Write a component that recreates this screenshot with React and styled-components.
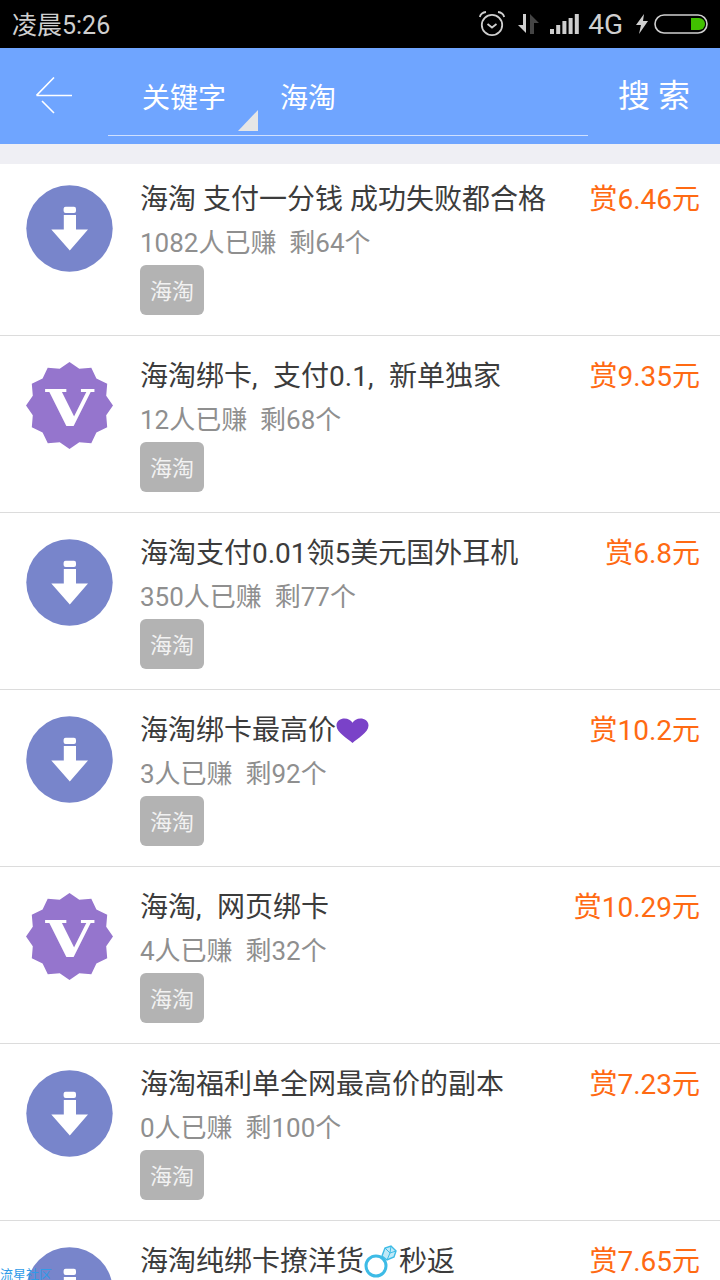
import React from 'react'
import styled, { createGlobalStyle } from 'styled-components'

const GlobalStyle = createGlobalStyle`
  html, body {
    margin: 0;
    padding: 0;
    height: 1280px;
    overflow: hidden;
    background: #ffffff;
    font-family: Roboto, "Noto Sans CJK SC", sans-serif;
  }
`

const Page = styled.div`
  position: relative;
  width: 720px;
  height: 1280px;
  overflow: hidden;
`

const StatusBar = styled.div`
  height: 48px;
  background: #000000;
  color: #cfcfcf;
  display: flex;
  align-items: center;
  justify-content: space-between;
  padding: 0 12px;
  box-sizing: border-box;
`

const Clock = styled.div`
  font-size: 25px;
  line-height: 48px;
  padding-top: 4px;
`

const StatusIcons = styled.div`
  display: flex;
  align-items: center;
`

const Spacer = styled.span`
  width: ${(p) => p.$w}px;
`

const Network = styled.span`
  font-size: 28px;
  line-height: 48px;
  padding-top: 2px;
  margin: 0 13px 0 8px;
`

const Header = styled.div`
  height: 96px;
  background: #6fa5ff;
  display: flex;
  color: #ffffff;
`

const BackButton = styled.div`
  width: 108px;
  display: flex;
  align-items: center;
  padding-left: 36px;
  box-sizing: border-box;
`

const SearchBox = styled.div`
  position: relative;
  width: 480px;
  height: 88px;
  border-bottom: 1px solid #cfe0ff;
  box-sizing: border-box;
  display: flex;
  align-items: center;
  padding: 8px 0 0 34px;
  font-size: 28px;
`

const Keyword = styled.span`
  margin-left: 54px;
`

const Corner = styled.div`
  position: absolute;
  right: 330px;
  bottom: 4px;
  width: 0;
  height: 0;
  border-style: solid;
  border-width: 0 0 21px 20px;
  border-color: transparent transparent #e6e6e6 transparent;
`

const SearchButton = styled.div`
  flex: 1;
  font-size: 32px;
  line-height: 96px;
  padding-left: 30px;
  letter-spacing: 8px;
`

const Divider = styled.div`
  height: 20px;
  background: #efeff4;
`

const List = styled.div`
  margin-top: -5px;
`

const Row = styled.div`
  height: 177px;
  box-sizing: border-box;
  border-bottom: 1px solid #dcdcdc;
  display: flex;
  align-items: flex-start;
  padding: 23px 20px 0 26px;
`

const RowIcon = styled.div`
  width: 87px;
  height: 87px;
  margin-top: 3px;
  flex-shrink: 0;
`

const Body = styled.div`
  flex: 1;
  margin-left: 27px;
`

const Title = styled.div`
  height: 36px;
  font-size: 28px;
  line-height: 36px;
  color: #3c3c3c;
  white-space: pre;

  svg {
    vertical-align: middle;
    margin-top: -4px;
  }
`

const Comma = styled.span`
  display: inline-block;
  width: 21px;
`

const Stats = styled.div`
  font-size: 26px;
  line-height: 36px;
  margin-top: 7px;
  color: #8f8f8f;
  white-space: pre;
`

const Tag = styled.div`
  width: 64px;
  height: 50px;
  margin-top: 4px;
  border-radius: 6px;
  background: #b3b3b3;
  color: #f2f2f2;
  font-size: 22px;
  line-height: 54px;
  text-align: center;
`

const Price = styled.div`
  font-size: 28px;
  line-height: 36px;
  color: #ff6a13;
  white-space: nowrap;
`

const Watermark = styled.div`
  position: absolute;
  left: 0;
  bottom: -2px;
  font-size: 13px;
  line-height: 14px;
  color: #2f9be8;
`

function BackArrow() {
  return (
    <svg width="38" height="38" viewBox="0 0 38 38" fill="none" stroke="#fff" strokeWidth="1.6">
      <path d="M0.5 18.5 H36 M18 0.5 L0.5 18.5 M6 24 L18 36" />
    </svg>
  )
}

function AlarmIcon() {
  return (
    <svg width="26" height="26" viewBox="0 0 26 26" fill="none" stroke="#cfcfcf" strokeWidth="1.8">
      <circle cx="13" cy="14" r="10.2" />
      <path d="M8.5 13 L13 16.5 L17.5 13" />
      <path d="M0.8 6 Q2 1.5 7 1 M25.2 6 Q24 1.5 19 1" />
    </svg>
  )
}

function DataIcon() {
  return (
    <svg width="21" height="20" viewBox="0 0 21 20">
      <path d="M8 0 V19 L0 11 H5 V0 Z" fill="#cfcfcf" />
      <path d="M12 20 V0 L21 9 H16 V20 Z" fill="#444444" />
    </svg>
  )
}

function SignalIcon() {
  const bars = [5, 9, 13, 16, 20]
  return (
    <svg width="30" height="20" viewBox="0 0 30 20" fill="#cfcfcf">
      {bars.map((h, i) => (
        <rect key={h} x={i * 6.2} y={20 - h} width="4" height={h} />
      ))}
    </svg>
  )
}

function BoltIcon() {
  return (
    <svg width="12" height="20" viewBox="0 0 12 20" fill="#cfcfcf">
      <path d="M8 0 L0 11 H5 L3 20 L12 7 H7 Z" />
    </svg>
  )
}

function BatteryIcon() {
  return (
    <svg width="54" height="20" viewBox="0 0 54 20">
      <rect x="1" y="1" width="52" height="18" rx="9" fill="none" stroke="#cfcfcf" strokeWidth="1.6" />
      <path d="M37 4 H45 A6 6 0 0 1 45 16 H37 Z" fill="#41c000" />
    </svg>
  )
}

function DownloadBadge() {
  return (
    <svg width="87" height="87" viewBox="0 0 87 87">
      <circle cx="43.5" cy="43.5" r="43.2" fill="#7885cb" />
      <rect x="37.6" y="21.7" width="12.4" height="6.4" rx="2" fill="#fff" />
      <path d="M37.8 30 H50 V44.5 H62 L43.8 65.5 L25.3 44.5 H37.8 Z" fill="#fff" />
    </svg>
  )
}

// twelve pointed seal, corners worked out from the angle
const sealPoints = Array.from({ length: 24 }, (_, i) => {
  const r = i % 2 === 0 ? 43.5 : 38
  const a = (i * Math.PI) / 12
  return `${(43.5 + r * Math.sin(a)).toFixed(1)},${(43.5 - r * Math.cos(a)).toFixed(1)}`
}).join(' ')

function VipBadge() {
  return (
    <svg width="87" height="87" viewBox="0 0 87 87">
      <polygon points={sealPoints} fill="#9575cd" />
      <text
        x="19.5"
        y="64"
        fontSize="50"
        fontWeight="700"
        fontFamily='"DejaVu Serif", serif'
        textLength="48"
        lengthAdjust="spacingAndGlyphs"
        fill="#fff"
      >
        V
      </text>
    </svg>
  )
}

function Heart() {
  return (
    <svg width="33" height="26" viewBox="0 0 33 28" preserveAspectRatio="none">
      <path d="M16.5 27 C12 22 0.5 16 0.5 8 C0.5 3 4.5 0.5 8.5 0.5 C12 0.5 15 2.5 16.5 5 C18 2.5 21 0.5 24.5 0.5 C28.5 0.5 32.5 3 32.5 8 C32.5 16 21 22 16.5 27 Z" fill="#7a42c8" />
    </svg>
  )
}

function Ring() {
  return (
    <svg width="35" height="33" viewBox="0 0 35 33" fill="none">
      <circle cx="12" cy="21" r="10" stroke="#3dbbe6" strokeWidth="3" />
      <path d="M18 11 L21 3 L27 1 L32 6 L30 12 L23 15 Z" fill="#bfe9f7" stroke="#3dbbe6" strokeWidth="1.4" />
      <path d="M21 3 L26 8 L23 15 M32 6 L26 8 M27 1 L26 8" stroke="#3dbbe6" strokeWidth="1" />
    </svg>
  )
}

const tasks = [
  { icon: 'down', title: '海淘 支付一分钱 成功失败都合格', stats: '1082人已赚  剩64个', price: '赏6.46元' },
  { icon: 'vip', title: <>海淘绑卡<Comma>,</Comma>支付0.1<Comma>,</Comma>新单独家</>, stats: '12人已赚  剩68个', price: '赏9.35元' },
  { icon: 'down', title: '海淘支付0.01领5美元国外耳机', stats: '350人已赚  剩77个', price: '赏6.8元' },
  { icon: 'down', title: <>海淘绑卡最高价<Heart /></>, stats: '3人已赚  剩92个', price: '赏10.2元' },
  { icon: 'vip', title: <>海淘<Comma>,</Comma>网页绑卡</>, stats: '4人已赚  剩32个', price: '赏10.29元' },
  { icon: 'down', title: '海淘福利单全网最高价的副本', stats: '0人已赚  剩100个', price: '赏7.23元' },
  { icon: 'down', title: <>海淘纯绑卡撩洋货<Ring />秒返</>, price: '赏7.65元' },
]

export default function App() {
  return (
    <Page>
      <GlobalStyle />
      <StatusBar>
        <Clock>凌晨5:26</Clock>
        <StatusIcons>
          <AlarmIcon />
          <Spacer $w={13} />
          <DataIcon />
          <Spacer $w={11} />
          <SignalIcon />
          <Network>4G</Network>
          <BoltIcon />
          <Spacer $w={6} />
          <BatteryIcon />
        </StatusIcons>
      </StatusBar>
      <Header>
        <BackButton>
          <BackArrow />
        </BackButton>
        <SearchBox>
          关键字
          <Keyword>海淘</Keyword>
          <Corner />
        </SearchBox>
        <SearchButton>搜索</SearchButton>
      </Header>
      <Divider />
      <List>
        {tasks.map((t, i) => (
          <Row key={i}>
            <RowIcon>{t.icon === 'vip' ? <VipBadge /> : <DownloadBadge />}</RowIcon>
            <Body>
              <Title>{t.title}</Title>
              {t.stats && <Stats>{t.stats}</Stats>}
              {t.stats && <Tag>海淘</Tag>}
            </Body>
            <Price>{t.price}</Price>
          </Row>
        ))}
      </List>
      <Watermark>流星社区</Watermark>
    </Page>
  )
}
